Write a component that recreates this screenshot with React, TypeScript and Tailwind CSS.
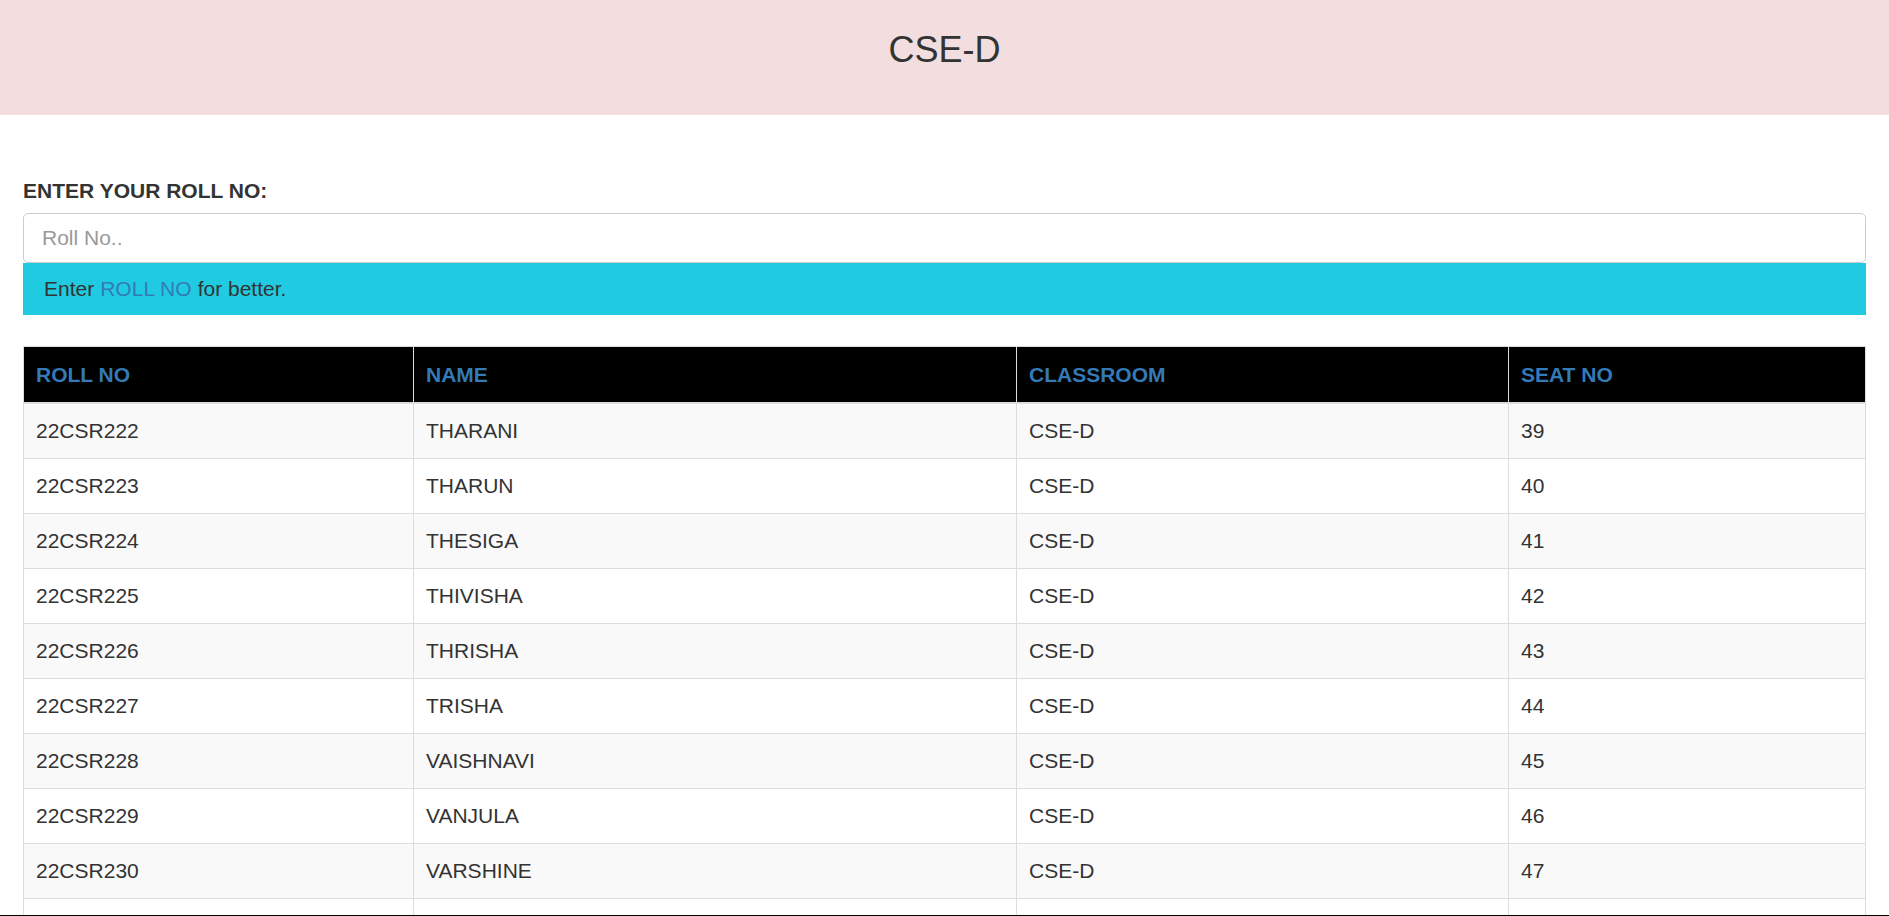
import React from 'react';

type Student = {
  roll: string;
  name: string;
  room: string;
  seat: number;
};

const students: Student[] = [
  { roll: '22CSR222', name: 'THARANI', room: 'CSE-D', seat: 39 },
  { roll: '22CSR223', name: 'THARUN', room: 'CSE-D', seat: 40 },
  { roll: '22CSR224', name: 'THESIGA', room: 'CSE-D', seat: 41 },
  { roll: '22CSR225', name: 'THIVISHA', room: 'CSE-D', seat: 42 },
  { roll: '22CSR226', name: 'THRISHA', room: 'CSE-D', seat: 43 },
  { roll: '22CSR227', name: 'TRISHA', room: 'CSE-D', seat: 44 },
  { roll: '22CSR228', name: 'VAISHNAVI', room: 'CSE-D', seat: 45 },
  { roll: '22CSR229', name: 'VANJULA', room: 'CSE-D', seat: 46 },
  { roll: '22CSR230', name: 'VARSHINE', room: 'CSE-D', seat: 47 },
  { roll: '22CSR231', name: 'VARSHINI', room: 'CSE-D', seat: 48 },
  { roll: '22CSR232', name: 'VIGNESH', room: 'CSE-D', seat: 49 },
];

const App: React.FC = () => (
  <div className="h-[916px] overflow-hidden border-b border-black bg-white font-['Liberation_Sans',Arial,sans-serif] text-[21px] leading-[28px] text-[#333]">
    <div className="h-[115px] bg-[#f2dede] pt-[30px] text-center">
      <h1 className="text-[36px] leading-[40px] font-normal">CSE-D</h1>
    </div>

    <div className="px-[23px] pt-[62px]">
      <label className="mb-[8px] block font-bold">ENTER YOUR ROLL NO:</label>
      <input
        type="text"
        placeholder="Roll No.."
        className="block h-[50px] w-full rounded-[5px] border border-[#ccc] px-[18px] text-[21px] text-[#555] placeholder:text-[#999] outline-none"
      />
      <div className="flex h-[52px] items-center bg-[#20cbe1] px-[21px]">
        Enter <span className="mx-[6px] text-[#337ab7]">ROLL NO</span> for better.
      </div>

      <table className="mt-[31px] w-full table-fixed border-collapse border border-[#ddd]">
        <thead>
          <tr className="bg-black">
            <th className="w-[390px] border border-[#ddd] border-b-2 px-[12px] pt-[14px] pb-[13px] text-left font-bold text-[#337ab7]">
              ROLL NO
            </th>
            <th className="w-[603px] border border-[#ddd] border-b-2 px-[12px] pt-[14px] pb-[13px] text-left font-bold text-[#337ab7]">
              NAME
            </th>
            <th className="w-[492px] border border-[#ddd] border-b-2 px-[12px] pt-[14px] pb-[13px] text-left font-bold text-[#337ab7]">
              CLASSROOM
            </th>
            <th className="border border-[#ddd] border-b-2 px-[12px] pt-[14px] pb-[13px] text-left font-bold text-[#337ab7]">
              SEAT NO
            </th>
          </tr>
        </thead>
        <tbody>
          {students.map((s) => (
            <tr key={s.roll} className="odd:bg-[#f9f9f9] even:bg-white">
              <td className="border border-[#ddd] px-[12px] py-[13px]">{s.roll}</td>
              <td className="border border-[#ddd] px-[12px] py-[13px]">{s.name}</td>
              <td className="border border-[#ddd] px-[12px] py-[13px]">{s.room}</td>
              <td className="border border-[#ddd] px-[12px] py-[13px]">{s.seat}</td>
            </tr>
          ))}
        </tbody>
      </table>
    </div>
  </div>
);

export default App;
